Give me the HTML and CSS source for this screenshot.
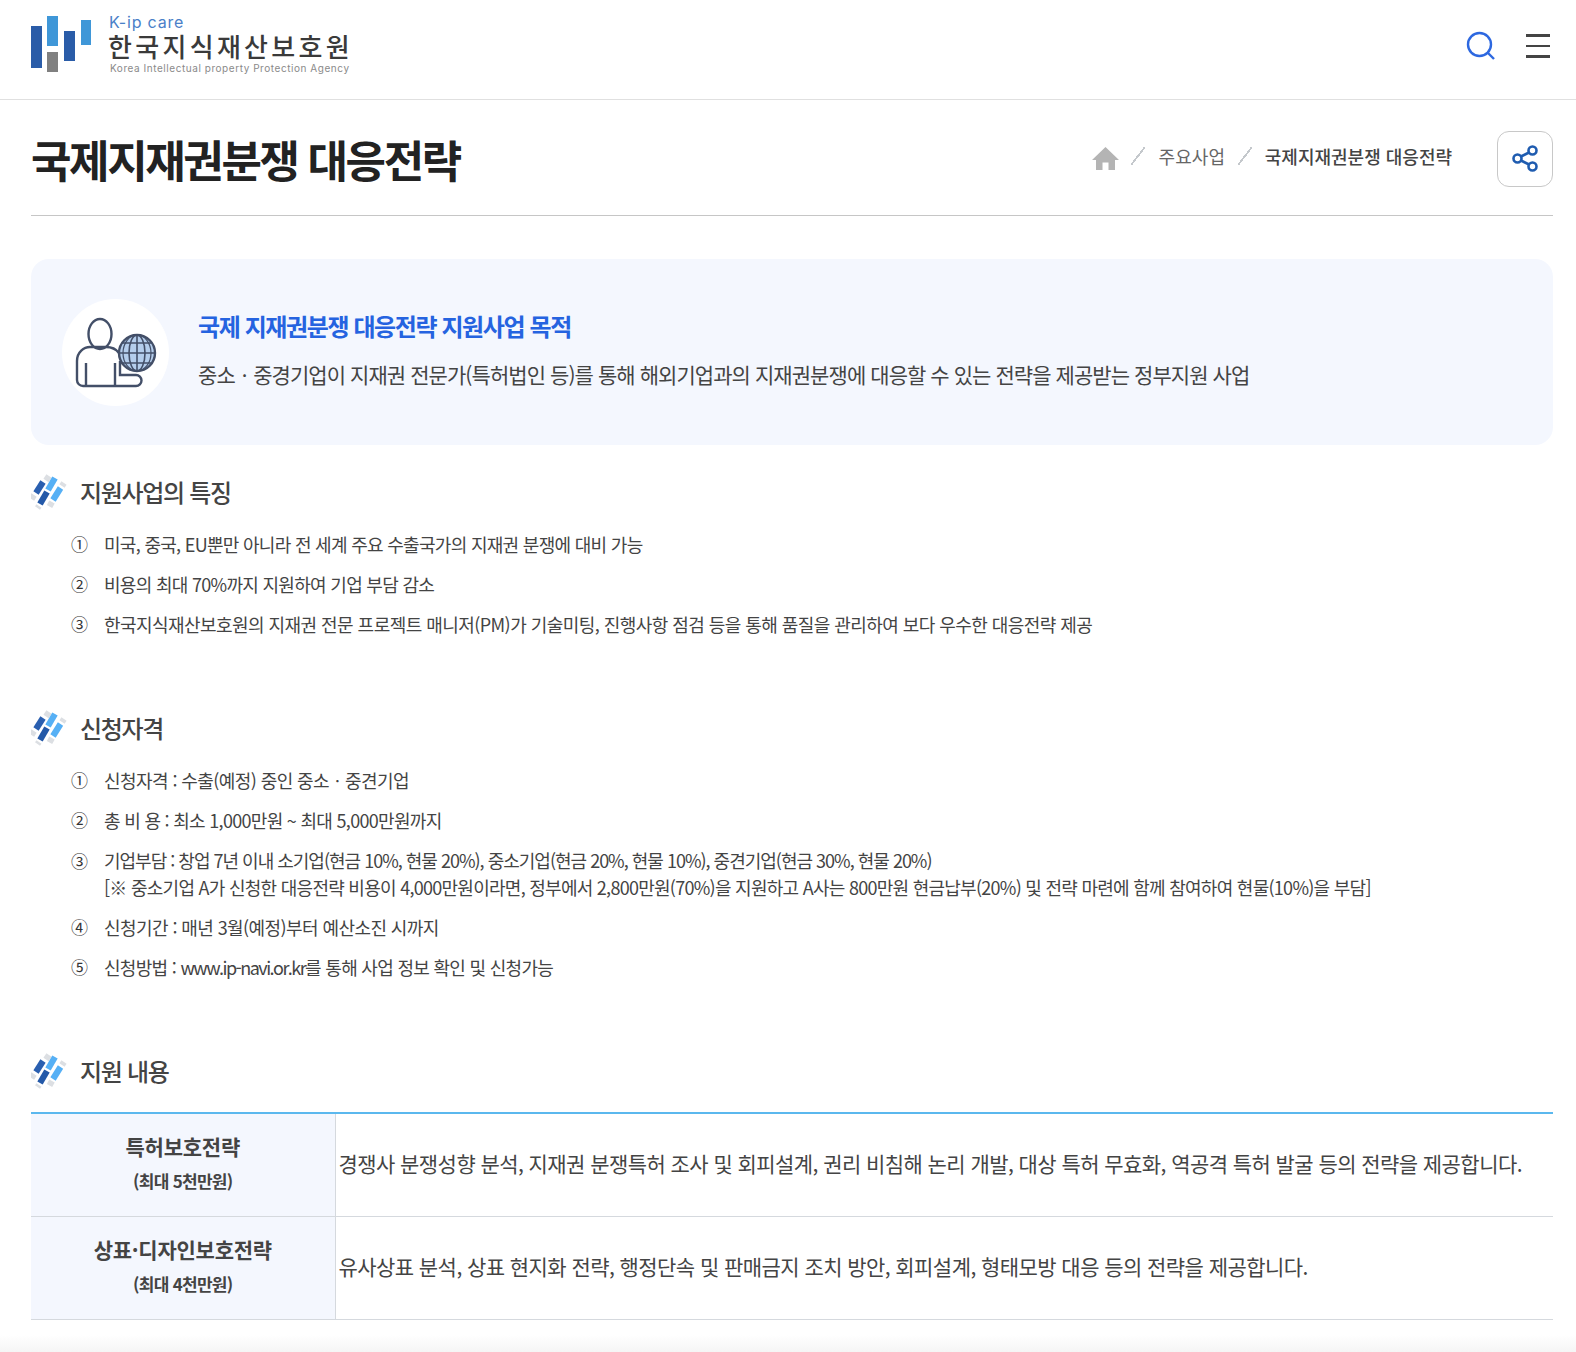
FILE: index.html
```html
<!DOCTYPE html>
<html lang="ko">
<head>
<meta charset="utf-8">
<title>국제지재권분쟁 대응전략</title>
<link rel="stylesheet" href="styles.css">
</head>
<body>
<svg class="defs" width="0" height="0" aria-hidden="true">
  <symbol id="mark" viewBox="6 6 36 36">
    <g fill="none" stroke-width="6.2" stroke-linecap="butt">
      <path d="M24 8 L21 12.5" stroke="#dcdfe3"/>
      <path d="M18 14 L11 25" stroke="#2a5fb0"/>
      <path d="M9 27 L6.5 31" stroke="#dcdfe3"/>
      <path d="M30 10 L23 22" stroke="#56b0f5"/>
      <path d="M22 24 L15 36" stroke="#2459a8"/>
      <path d="M14 38 L12.5 40" stroke="#dcdfe3"/>
      <path d="M39 15 L37 18" stroke="#dcdfe3"/>
      <path d="M35.5 20 L28 32" stroke="#56b0f5"/>
      <path d="M27 34 L24.5 38.5" stroke="#dcdfe3"/>
    </g>
  </symbol>
</svg>

<header class="site-header">
  <a class="logo">
    <svg class="logo-mark" width="62" height="58" viewBox="0 0 62 58" aria-hidden="true">
      <rect x="0" y="10" width="11" height="42" fill="#2a5ca8"/>
      <rect x="16" y="0" width="11" height="30" fill="#3f97d8"/>
      <rect x="16" y="36" width="11" height="20" fill="#808080"/>
      <rect x="33" y="15" width="11" height="30" fill="#2a5ca8"/>
      <rect x="50" y="4" width="10" height="25" fill="#3f97d8"/>
    </svg>
    <span class="logo-text">
      <span class="logo-top">K-ip care</span>
      <span class="logo-name">한국지식재산보호원</span>
      <span class="logo-sub">Korea Intellectual property Protection Agency</span>
    </span>
  </a>
  <div class="header-tools">
    <svg width="30" height="30" viewBox="0 0 30 30" aria-hidden="true">
      <circle cx="13.5" cy="13.5" r="11.5" fill="none" stroke="#2d68e0" stroke-width="2.4"/>
      <path d="M21.5 21.5 L28 28" stroke="#2d68e0" stroke-width="2.4"/>
    </svg>
    <span class="menu-icon"><i></i><i></i><i></i></span>
  </div>
</header>

<main class="page">
  <div class="title-bar">
    <h1>국제지재권분쟁 대응전략</h1>
    <nav class="crumbs">
      <svg width="27" height="24" viewBox="0 0 27 24" aria-hidden="true">
        <path d="M13.5 0 L27 13 H23 V23 H16.5 V15.5 H10.5 V23 H4 V13 H0 Z" fill="#b4b4b4"/>
      </svg>
      <span class="sep"></span>
      <span class="crumb">주요사업</span>
      <span class="sep"></span>
      <span class="crumb current">국제지재권분쟁 대응전략</span>
    </nav>
    <button class="share" type="button" aria-label="공유">
      <svg width="26" height="27" viewBox="0 0 26 27" aria-hidden="true">
        <g fill="none" stroke="#1f5cb0" stroke-width="2.6">
          <circle cx="5.5" cy="13.5" r="4"/>
          <circle cx="20.5" cy="5.5" r="4"/>
          <circle cx="20.5" cy="21.5" r="4"/>
          <path d="M9 11.5 L17 7.5 M9 15.5 L17 19.5"/>
        </g>
      </svg>
    </button>
  </div>

  <section class="purpose">
    <div class="purpose-icon">
      <svg width="107" height="107" viewBox="0 0 107 107" aria-hidden="true">
        <g fill="none" stroke="#434f68" stroke-width="2.4">
          <ellipse cx="38" cy="35" rx="11.5" ry="15"/>
          <path d="M58 62 V76 H74 a5.5 5.5 0 0 1 0 11 H21 a6 6 0 0 1 -6 -6 V62 C15 53 22 48 28 48 H44 C50 48 54 50 57 54"/>
          <path d="M24 64 V87 M53 64 V87"/>
          <circle cx="75" cy="54" r="18" fill="#b4cdec"/>
          <ellipse cx="75" cy="54" rx="8" ry="18" stroke-width="1.6"/>
          <ellipse cx="75" cy="54" rx="14" ry="18" stroke-width="1.2"/>
          <path d="M75 36 V72 M57 54 H93 M60 44 H90 M60 64 H90" stroke-width="1.6"/>
        </g>
      </svg>
    </div>
    <div class="purpose-text">
      <h2>국제 지재권분쟁 대응전략 지원사업 목적</h2>
      <p>중소ㆍ중경기업이 지재권 전문가(특허법인 등)를 통해 해외기업과의 지재권분쟁에 대응할 수 있는 전략을 제공받는 정부지원 사업</p>
    </div>
  </section>

  <h3 class="sec first"><svg width="36" height="36"><use href="#mark"/></svg>지원사업의 특징</h3>
  <ol class="items">
    <li><span class="n">①</span><span>미국, 중국, EU뿐만 아니라 전 세계 주요 수출국가의 지재권 분쟁에 대비 가능</span></li>
    <li><span class="n">②</span><span>비용의 최대 70%까지 지원하여 기업 부담 감소</span></li>
    <li><span class="n">③</span><span class="wide">한국지식재산보호원의 지재권 전문 프로젝트 매니저(PM)가 기술미팅, 진행사항 점검 등을 통해 품질을 관리하여 보다 우수한 대응전략 제공</span></li>
  </ol>

  <h3 class="sec"><svg width="36" height="36"><use href="#mark"/></svg>신청자격</h3>
  <ol class="items">
    <li><span class="n">①</span><span class="wider">신청자격 : 수출(예정) 중인 중소ㆍ중견기업</span></li>
    <li><span class="n">②</span><span>총 비 용 : 최소 1,000만원 ~ 최대 5,000만원까지</span></li>
    <li class="two"><span class="n">③</span><span class="long"><span class="tight">기업부담 : 창업 7년 이내 소기업(현금 10%, 현물 20%), 중소기업(현금 20%, 현물 10%), 중견기업(현금 30%, 현물 20%)</span><br>[※ 중소기업 A가 신청한 대응전략 비용이 4,000만원이라면, 정부에서 2,800만원(70%)을 지원하고 A사는 800만원 현금납부(20%) 및 전략 마련에 함께 참여하여 현물(10%)을 부담]</span></li>
    <li><span class="n">④</span><span class="wider">신청기간 : 매년 3월(예정)부터 예산소진 시까지</span></li>
    <li><span class="n">⑤</span><span>신청방법 : <span class="url">www.ip-navi.or.kr</span>를 통해 사업 정보 확인 및 신청가능</span></li>
  </ol>

  <h3 class="sec"><svg width="36" height="36"><use href="#mark"/></svg>지원 내용</h3>
  <table class="support">
    <tr>
      <th><strong>특허보호전략</strong><small>(최대 5천만원)</small></th>
      <td>경쟁사 분쟁성향 분석, 지재권 분쟁특허 조사 및 회피설계, 권리 비침해 논리 개발, 대상 특허 무효화, 역공격 특허 발굴 등의 전략을 제공합니다.</td>
    </tr>
    <tr>
      <th><strong>상표·디자인보호전략</strong><small>(최대 4천만원)</small></th>
      <td>유사상표 분석, 상표 현지화 전략, 행정단속 및 판매금지 조치 방안, 회피설계, 형태모방 대응 등의 전략을 제공합니다.</td>
    </tr>
  </table>
</main>
<div class="bottom-shade"></div>
</body>
</html>
```
FILE: styles.css
```css
* { box-sizing: border-box; }
html, body { margin: 0; padding: 0; background: #fff; }
body {
  font-family: "Noto Sans CJK KR", "Noto Sans", sans-serif;
  color: #333;
  overflow-x: hidden;
}
.defs { position: absolute; }

.site-header {
  height: 100px;
  border-bottom: 1px solid #e0e0e0;
  padding: 16px 26px 0 31px;
  display: flex;
  justify-content: space-between;
  align-items: flex-start;
}
.logo { display: flex; gap: 15px; }
.logo-mark { display: block; }
.logo-text { display: flex; flex-direction: column; width: 244px; }
.logo-top { font: 400 16px/13px "Inter", sans-serif; color: #4a80c8; letter-spacing: 0.8px; margin-left: 1px; }
.logo-name { font-size: 26px; line-height: 33px; font-weight: 500; color: #3a3a3a; letter-spacing: 3.3px; white-space: nowrap; }
.logo-sub { font: 400 10px/13px "Inter", sans-serif; color: #8a8a8a; letter-spacing: 0.55px; margin: 0 0 0 2px; white-space: nowrap; }
.header-tools { display: flex; align-items: center; gap: 30px; padding-top: 15px; }
.header-tools svg { display: block; }
.menu-icon { display: flex; flex-direction: column; gap: 8px; width: 24px; }
.menu-icon i { display: block; height: 2.5px; background: #444; }

.page { padding: 0 23px 0 31px; }
.title-bar {
  height: 116px;
  border-bottom: 1px solid #c6c6c6;
  display: flex;
  align-items: center;
  padding-top: 2px;
}
h1 { margin: 0; font-size: 44px; line-height: 60px; font-weight: 700; color: #222; letter-spacing: -2.4px; flex: 1; }
.crumbs { display: flex; align-items: center; margin: 0 45px 6px 0; }
.crumbs svg { display: block; margin-top: 6px; }
.sep { width: 14px; height: 18px; margin: 0 13px 0 12.5px; background: linear-gradient(to bottom right, transparent 46%, #c4c8cc 46%, #c4c8cc 54%, transparent 54%); }
.crumb { font-size: 18px; line-height: 26px; color: #666; letter-spacing: 0.15px; }
.crumb.current { font-weight: 500; color: #444; letter-spacing: 0; }
.share { width: 56px; height: 56px; padding: 0; background: #fff; border: 1px solid #c8c8c8; border-radius: 12px; display: flex; align-items: center; justify-content: center; }

.purpose {
  margin-top: 43px;
  height: 186px;
  background: #f4f7fe;
  border-radius: 18px;
  padding-left: 31px;
  display: flex;
  align-items: center;
  gap: 29px;
}
.purpose-icon { width: 107px; height: 107px; border-radius: 50%; background: #fff; flex: none; }
.purpose-icon svg { display: block; }
h2 { margin: 0; font-size: 24px; line-height: 34px; font-weight: 700; color: #2563e0; letter-spacing: -1.4px; }
.purpose-text { margin-top: -5px; }
.purpose-text p { margin: 14px 0 0; font-size: 21px; line-height: 34px; color: #444; letter-spacing: -0.93px; }

.sec {
  margin: 66px 0 0;
  height: 36px;
  padding-bottom: 2px;
  display: flex;
  align-items: center;
  gap: 13px;
  font-size: 24px;
  font-weight: 500;
  color: #444;
  letter-spacing: -1.3px;
}
.sec svg { display: block; margin-top: 2px; }
.sec.first { margin-top: 29px; }
.items { list-style: none; margin: 14px 0 0; padding: 0 0 0 40px; }
.items li { display: flex; padding: 7px 0; font-size: 18px; line-height: 26px; color: #444; letter-spacing: -0.7px; }
.items li.two { padding: 6.5px 0; line-height: 27px; }
.items .n { width: 33px; flex: none; font-size: 17px; color: #333; }
.items .wide { letter-spacing: -0.55px; }
.items .wider { letter-spacing: -0.58px; }
.items .long { letter-spacing: -0.73px; }
.items .tight { letter-spacing: -1px; }
.items .url { letter-spacing: -1.55px; }

.support { width: 100%; margin-top: 23px; border-collapse: collapse; border-top: 2px solid #5bb8ee; table-layout: fixed; }
.support tr { height: 103px; border-bottom: 1px solid #d5d9de; }
.support th { width: 304px; background: #f4f7fe; border-right: 1px solid #d5d9de; padding: 0 0 3px; color: #444; }
.support strong { display: block; font-size: 21px; line-height: 30px; font-weight: 700; letter-spacing: -0.25px; }
.support small { display: block; margin-top: 6px; font-size: 17px; line-height: 28px; font-weight: 700; letter-spacing: -0.7px; }
.support td { padding: 0 0 4px 3px; font-size: 21px; line-height: 34px; color: #444; letter-spacing: -0.56px; }

.bottom-shade { height: 17px; margin-top: 15px; background: linear-gradient(#fff, #f5f5f5); }
```
